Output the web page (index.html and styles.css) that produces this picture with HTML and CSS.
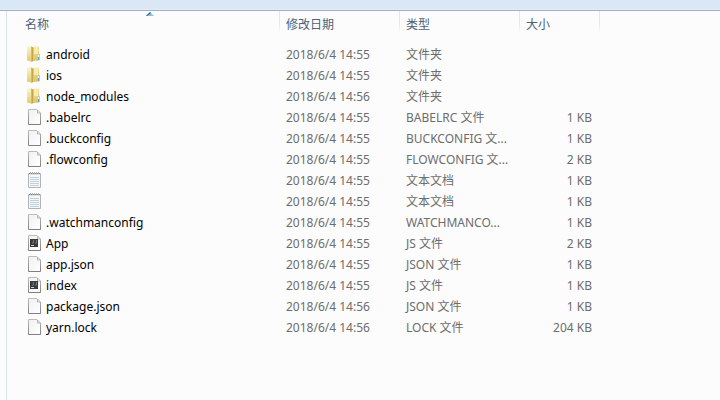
FILE: index.html
```html
<!DOCTYPE html>
<html lang="zh-CN">
<head>
    <meta charset="UTF-8">
    <meta name="viewport" content="width=device-width, initial-scale=1.0">
    <title>文件列表</title>
    <link rel="stylesheet" href="styles.css">
</head>
<body>
    <svg class="sprite" aria-hidden="true">
        <defs>
            <linearGradient id="folder-light" x1="0" y1="0" x2="0" y2="1">
                <stop offset="0" stop-color="#fbf6cc"/>
                <stop offset="1" stop-color="#e4cb70"/>
            </linearGradient>
            <linearGradient id="folder-back" x1="0" y1="0" x2="0" y2="1">
                <stop offset="0" stop-color="#f3e6a2"/>
                <stop offset="1" stop-color="#dfc25e"/>
            </linearGradient>
            <linearGradient id="page-edge" x1="0" y1="0" x2="0" y2="1">
                <stop offset="0" stop-color="#bcbcbc"/>
                <stop offset="1" stop-color="#808080"/>
            </linearGradient>
            <linearGradient id="page-fill" x1="0" y1="0" x2="1" y2="1">
                <stop offset="0" stop-color="#f1f1f1"/>
                <stop offset="1" stop-color="#ffffff"/>
            </linearGradient>
        </defs>
        <symbol id="folder" viewBox="0 0 16 16">
            <path d="M6 1l7-.5v14L6 15z" fill="url(#folder-back)"/>
            <path d="M1 .5L5 0v15.5l-4-1z" fill="url(#folder-light)"/>
            <path d="M5 0l1 1v15l-1-.5z" fill="#d8bb5c"/>
            <path d="M6 1l1 .5v13.500L6 16z" fill="#c5a64c"/>
            <path d="M7 1.500l1 .5v12l-1 1z" fill="#e2ca72"/>
            <path d="M8 1h4v7H8z" fill="#f6ecb0"/>
            <path d="M12 7.500l2 .5v6l-2 .5z" fill="#dccb86"/>
            <path d="M12 9h1v2h-1z" fill="#fff"/>
            <path d="M12 11h1v3h-1z" fill="#4da9dc"/>
        </symbol>
        <symbol id="page" viewBox="0 0 16 16">
            <path d="M2.5.5H11L14.5 4v11.5h-12z" fill="url(#page-fill)" stroke="url(#page-edge)"/>
            <path d="M11.5 1v3H14" fill="none" stroke="#b4b4b4"/>
        </symbol>
        <symbol id="text" viewBox="0 0 16 16">
            <path d="M2.5 1.5h12v14h-12z" fill="#f5f8fa" stroke="#b0b4b7"/>
            <path d="M4 5.5h9M4 7.5h9M4 9.5h9M4 11.5h9M4 13.5h9" stroke="#c2d0d8"/>
            <path d="M3 2.5h11" stroke="#dedede"/>
            <path d="M3 1.5h1M5 1.5h1M7 1.5h1M9 1.5h1M11 1.5h1M13 1.5h1" stroke="#858789"/>
            <path d="M4 .5h1M6 .5h1M8 .5h1M10 .5h1M12 .5h1" stroke="#b5b5b5"/>
        </symbol>
        <symbol id="script" viewBox="0 0 16 16">
            <path d="M2.5.5H11L14.5 4v11.5h-12z" fill="url(#page-fill)" stroke="url(#page-edge)"/>
            <path d="M11.5 1v3H14" fill="none" stroke="#b4b4b4"/>
            <path d="M4 4h8v8H4z" fill="#3a3a3a"/>
            <path d="M7.5 5v3H6M10.5 5v3H9" fill="none" stroke="#777"/>
            <path d="M5 10.5h3" stroke="#cfcfcf"/>
        </symbol>
    </svg>

    <div class="toolbar"></div>
    <div class="window">
        <div class="nav-pane"></div>
        <main class="file-pane">
            <table class="files">
                <colgroup>
                    <col class="col-name">
                    <col class="col-date">
                    <col class="col-type">
                    <col class="col-size">
                </colgroup>
                <thead>
                    <tr>
                        <th aria-sort="ascending">
                            <button type="button">名称</button>
                            <svg class="sort-arrow" viewBox="0 0 8 4" aria-hidden="true"><path d="M4 0l4 4H0z" fill="#8cc3dc"/><path d="M4 0L0 4h1l4-3z" fill="#3c5e72"/></svg>
                        </th>
                        <th><button type="button">修改日期</button></th>
                        <th><button type="button">类型</button></th>
                        <th><button type="button">大小</button></th>
                    </tr>
                </thead>
                <tbody>
                    <tr><td class="name"><svg class="icon"><use href="#folder"/></svg>android</td><td>2018/6/4 14:55</td><td>文件夹</td><td class="size"></td></tr>
                    <tr><td class="name"><svg class="icon"><use href="#folder"/></svg>ios</td><td>2018/6/4 14:55</td><td>文件夹</td><td class="size"></td></tr>
                    <tr><td class="name"><svg class="icon"><use href="#folder"/></svg>node_modules</td><td>2018/6/4 14:56</td><td>文件夹</td><td class="size"></td></tr>
                    <tr><td class="name"><svg class="icon"><use href="#page"/></svg>.babelrc</td><td>2018/6/4 14:55</td><td>BABELRC 文件</td><td class="size">1 KB</td></tr>
                    <tr><td class="name"><svg class="icon"><use href="#page"/></svg>.buckconfig</td><td>2018/6/4 14:55</td><td>BUCKCONFIG 文...</td><td class="size">1 KB</td></tr>
                    <tr><td class="name"><svg class="icon"><use href="#page"/></svg>.flowconfig</td><td>2018/6/4 14:55</td><td>FLOWCONFIG 文...</td><td class="size">2 KB</td></tr>
                    <tr><td class="name"><svg class="icon"><use href="#text"/></svg></td><td>2018/6/4 14:55</td><td>文本文档</td><td class="size">1 KB</td></tr>
                    <tr><td class="name"><svg class="icon"><use href="#text"/></svg></td><td>2018/6/4 14:55</td><td>文本文档</td><td class="size">1 KB</td></tr>
                    <tr><td class="name"><svg class="icon"><use href="#page"/></svg>.watchmanconfig</td><td>2018/6/4 14:55</td><td>WATCHMANCO...</td><td class="size">1 KB</td></tr>
                    <tr><td class="name"><svg class="icon"><use href="#script"/></svg>App</td><td>2018/6/4 14:55</td><td>JS 文件</td><td class="size">2 KB</td></tr>
                    <tr><td class="name"><svg class="icon"><use href="#page"/></svg>app.json</td><td>2018/6/4 14:55</td><td>JSON 文件</td><td class="size">1 KB</td></tr>
                    <tr><td class="name"><svg class="icon"><use href="#script"/></svg>index</td><td>2018/6/4 14:55</td><td>JS 文件</td><td class="size">1 KB</td></tr>
                    <tr><td class="name"><svg class="icon"><use href="#page"/></svg>package.json</td><td>2018/6/4 14:56</td><td>JSON 文件</td><td class="size">1 KB</td></tr>
                    <tr><td class="name"><svg class="icon"><use href="#page"/></svg>yarn.lock</td><td>2018/6/4 14:56</td><td>LOCK 文件</td><td class="size">204 KB</td></tr>
                </tbody>
            </table>
        </main>
    </div>
</body>
</html>
```
FILE: styles.css
```css
body {
    margin: 0;
    min-height: 100vh;
    display: flex;
    flex-direction: column;
    background-color: #fcfcfc;
    color: #6d6d6d;
    font-family: "Noto Sans", "Noto Sans CJK SC", sans-serif;
    font-size: 12px;
}

.sprite {
    position: absolute;
    width: 0;
    height: 0;
}

.toolbar {
    height: 9px;
    background-color: #dae7f5;
    border-bottom: 1px solid #e4edf7;
    box-shadow: 0 1px 0 #a0afcf;
    margin-bottom: 1px;
}

.window {
    flex: 1;
    display: flex;
}

.nav-pane {
    width: 6px;
    border-right: 1px solid #d6e5f5;
}

.file-pane {
    flex: 1;
    padding-left: 12px;
}

.files {
    width: 581px;
    table-layout: fixed;
    border-collapse: collapse;
}

.col-name {
    width: 261px;
}

.col-date,
.col-type {
    width: 120px;
}

.col-size {
    width: 80px;
}

th {
    position: relative;
    height: 33px;
    padding: 0 6px;
    text-align: left;
    vertical-align: top;
    background: linear-gradient(#d9e7f3, #dfeaf4 50%, #fcfcfc) right top / 1px 23px no-repeat;
}

th button {
    display: block;
    width: 100%;
    padding: 0;
    border: none;
    background: none;
    color: #4c607a;
    font: inherit;
    font-weight: normal;
    line-height: 28px;
    text-align: left;
    cursor: pointer;
}

.sort-arrow {
    position: absolute;
    top: 1px;
    left: 50%;
    width: 8px;
    height: 4px;
    margin-left: -4px;
}

td {
    height: 21px;
    padding: 0 6px;
    line-height: 21px;
    white-space: nowrap;
}

.name {
    padding-left: 7px;
    color: #000;
}

.icon {
    width: 16px;
    height: 16px;
    margin: 2px 4px 0 0;
    vertical-align: top;
}

.size {
    padding-right: 8px;
    text-align: right;
}

tbody tr:hover {
    background-color: #eaf4fd;
}
```
